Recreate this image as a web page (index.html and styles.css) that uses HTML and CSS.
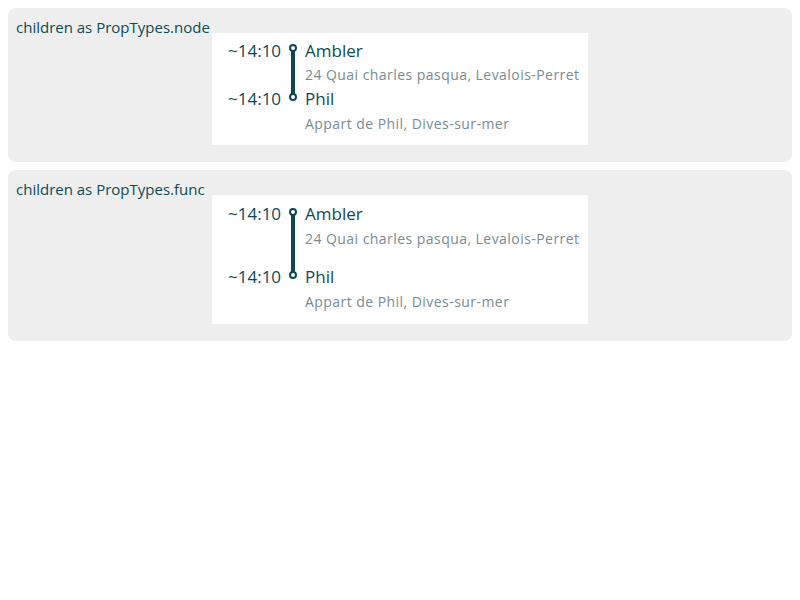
FILE: index.html
```html
<!DOCTYPE html>
<html lang="en">
<head>
<meta charset="utf-8">
<title>Trip stops</title>
<link rel="stylesheet" href="styles.css">
</head>
<body>
  <section class="panel">
    <div class="panel-title">children as PropTypes.node</div>
    <div class="card">
      <div class="trip">
        <div class="time t1">~14:10</div>
        <div class="rail"><span class="dot"></span><span class="line"></span><span class="dot"></span></div>
        <div class="name n1">Ambler</div>
        <div class="addr a1">24 Quai charles pasqua, Levalois-Perret</div>
        <div class="time t2">~14:10</div>
        <div class="name n2">Phil</div>
        <div class="addr a2">Appart de Phil, Dives-sur-mer</div>
      </div>
    </div>
  </section>
  <section class="panel">
    <div class="panel-title">children as PropTypes.func</div>
    <div class="card card-func">
      <div class="trip trip-func">
        <div class="time t1">~14:10</div>
        <div class="rail"><span class="dot"></span><span class="line"></span><span class="dot"></span></div>
        <div class="name n1">Ambler</div>
        <div class="addr a1">24 Quai charles pasqua, Levalois-Perret</div>
        <div class="time t2">~14:10</div>
        <div class="name n2">Phil</div>
        <div class="addr a2">Appart de Phil, Dives-sur-mer</div>
      </div>
    </div>
  </section>
</body>
</html>
```
FILE: styles.css
```css
html, body {
  margin: 0;
  padding: 0;
  background: #ffffff;
}
body {
  padding: 8px;
  font-family: "Open Sans", "Noto Sans", sans-serif;
  color: #0c4a53;
}
.panel {
  display: flex;
  align-items: flex-start;
  background: #eeeeee;
  border-radius: 8px;
  padding: 9px 8px 17px 8px;
  margin-bottom: 8px;
}
.panel-title {
  width: 196px;
  flex: none;
  font-size: 15px;
  line-height: 20px;
  color: #0c4a53;
}
.card {
  width: 376px;
  box-sizing: border-box;
  background: #ffffff;
  margin-top: 16px;
  padding: 6px 8px 8px 16px;
}
.card-func {
  padding: 7px 8px 9px 16px;
}
.trip {
  display: grid;
  grid-template-columns: 57px 15px 1fr;
  grid-template-rows: 24px 24px 24px 26px;
}
.trip-func {
  grid-template-rows: 24px 39px 24px 26px;
}
.time {
  grid-column: 1;
  text-align: right;
  padding-right: 4px;
  font-size: 17px;
  line-height: 24px;
  color: #0c4a53;
}
.t1 { grid-row: 1; }
.t2 { grid-row: 3; }
.name {
  grid-column: 3;
  padding-left: 5px;
  font-size: 17px;
  line-height: 24px;
  color: #0c4a53;
}
.n1 { grid-row: 1; }
.n2 { grid-row: 3; }
.addr {
  grid-column: 3;
  padding-left: 5px;
  font-size: 14px;
  letter-spacing: 0.45px;
  line-height: 24px;
  color: #768c91;
  white-space: nowrap;
}
.a1 { grid-row: 2; align-self: start; }
.a2 { grid-row: 4; line-height: 26px; }
.trip-func .a1 { line-height: 26px; }
.rail {
  grid-column: 2;
  grid-row: 1 / 4;
  display: flex;
  flex-direction: column;
  align-items: center;
  margin: 5px 0 10px;
}
.trip-func .rail {
  margin: 6px 0 10px;
}
.dot {
  width: 8px;
  height: 8px;
  box-sizing: border-box;
  border: 2px solid #0b4750;
  border-radius: 50%;
  background: #ffffff;
  flex: none;
}
.line {
  width: 4px;
  flex: 1;
  background: #0b4750;
  margin: -1px 0;
}
```
